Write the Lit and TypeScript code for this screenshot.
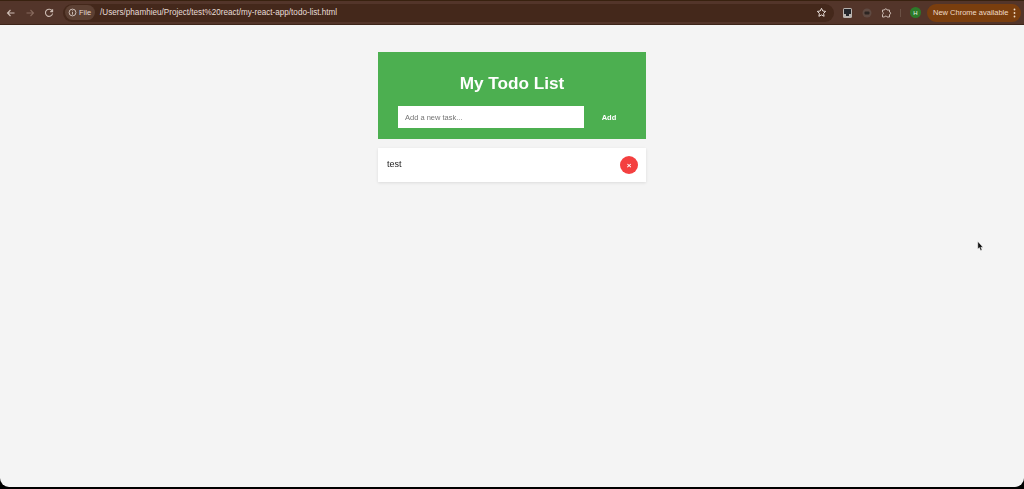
import { LitElement, html, css } from "lit";
import { customElement } from "lit/decorators.js";

@customElement("app-root")
export class AppRoot extends LitElement {
  static styles = css`
    :host {
      display: block;
      width: 1024px;
      height: 489px;
      overflow: hidden;
      background: #000;
      font-family: "Liberation Sans", Arial, sans-serif;
    }
    .window {
      height: 487px;
      display: flex;
      flex-direction: column;
      background: #f4f4f4;
      border-radius: 0 0 9px 9px;
      overflow: hidden;
      position: relative;
      filter: blur(0.3px);
    }
    .toolbar {
      height: 25px;
      flex: none;
      background: #53352a;
      border-top: 1px solid #38210f;
      border-bottom: 1px solid #3d2418;
      box-sizing: border-box;
      display: flex;
      align-items: center;
      color: #eadfd9;
      font-size: 8px;
    }
    .nav {
      display: flex;
      align-items: center;
      gap: 8px;
      padding-left: 5px;
      width: 63px;
      flex: none;
      box-sizing: border-box;
    }
    .nav svg, .tools svg { display: block; flex: none; }
    .omni {
      width: 771px;
      height: 18px;
      flex: none;
      border-radius: 9px;
      background: #44281b;
      display: flex;
      align-items: center;
      box-sizing: border-box;
      padding-right: 7px;
    }
    .chip {
      height: 15px;
      margin-left: 2px;
      padding: 0 4px 0 3px;
      border-radius: 8px;
      background: #5c4033;
      display: flex;
      align-items: center;
      gap: 2px;
      flex: none;
      color: #e4d8d2;
      font-size: 7.5px;
    }
    .url {
      margin-left: 5px;
      color: #e8ddd8;
      flex: 1;
      white-space: nowrap;
      font-size: 8.15px;
    }
    .tools {
      display: flex;
      align-items: center;
      flex: 1;
      padding-left: 8px;
    }
    .sep { width: 1px; height: 8px; background: #6a5044; margin: 0 9px 0 8px; }
    .avatar {
      width: 11px;
      height: 11px;
      border-radius: 50%;
      background: #2d7a2a;
      color: #e6f2e6;
      font-size: 6px;
      display: flex;
      align-items: center;
      justify-content: center;
      flex: none;
    }
    .update {
      margin-left: 6px;
      height: 18px;
      width: 94px;
      flex: none;
      box-sizing: border-box;
      border-radius: 9px;
      background: #7a3e0e;
      color: #f0dcc8;
      font-size: 7.5px;
      display: flex;
      align-items: center;
      justify-content: space-between;
      padding: 0 5px 0 6px;
      white-space: nowrap;
    }
    main {
      flex: 1;
      display: flex;
      flex-direction: column;
      align-items: center;
      padding-top: 27px;
    }
    .card {
      width: 268px;
      display: flex;
      flex-direction: column;
      gap: 9px;
    }
    header {
      height: 87px;
      box-sizing: border-box;
      background: #4caf50;
      padding: 21px 20px 0;
      display: flex;
      flex-direction: column;
      align-items: center;
    }
    h1 {
      margin: 0;
      color: #fff;
      font-size: 17.2px;
      line-height: 21px;
      font-weight: 700;
    }
    .form {
      margin-top: 12px;
      display: flex;
      align-self: stretch;
      height: 22px;
    }
    .field {
      width: 186px;
      flex: none;
      background: #fff;
      color: #757575;
      font-size: 7.5px;
      display: flex;
      align-items: center;
      padding-left: 7px;
      box-sizing: border-box;
    }
    .add {
      flex: 1;
      color: #fff;
      font-size: 7.5px;
      font-weight: 700;
      display: flex;
      align-items: center;
      justify-content: center;
      padding-left: 8px;
    }
    .item {
      height: 34px;
      box-sizing: border-box;
      background: #fff;
      box-shadow: 0 1px 3px rgba(0, 0, 0, 0.1);
      display: flex;
      align-items: center;
      justify-content: space-between;
      padding: 0 8px 0 9px;
      color: #222;
      font-size: 9px;
    }
    .label { padding-bottom: 2px; }
    .del {
      width: 18px;
      height: 18px;
      border-radius: 50%;
      background: #f44040;
      color: #fff;
      font-size: 8px;
      font-weight: 700;
      display: flex;
      align-items: center;
      justify-content: center;
    }
    .cursor { position: absolute; left: 977px; top: 241px; }
  `;

  render() {
    return html`
      <div class="window">
        <div class="toolbar">
          <div class="nav">
            <svg width="12" height="12" viewBox="0 0 12 12" fill="none" stroke="#cdbcb3" stroke-width="1.1"><path d="M9.5 6H2.5M5.5 3L2.5 6L5.5 9"/></svg>
            <svg width="10" height="12" viewBox="0 0 10 12" fill="none" stroke="#86695c" stroke-width="1.1"><path d="M1.5 6H8.5M5.5 3L8.5 6L5.5 9"/></svg>
            <svg width="12" height="12" viewBox="0 0 12 12" fill="none" stroke="#cdbcb3" stroke-width="1.1"><path d="M9.3 4.2A3.6 3.6 0 1 0 9.6 6.5"/><path d="M9.6 2.2V4.6H7.2"/></svg>
          </div>
          <div class="omni">
            <div class="chip">
              <svg width="9" height="9" viewBox="0 0 9 9" fill="none" stroke="#e4d8d2" stroke-width=".8"><circle cx="4.5" cy="4.5" r="3.4"/><path d="M4.5 4V6.6M4.5 2.4V3.2"/></svg>
              <span>File</span>
            </div>
            <span class="url">/Users/phamhieu/Project/test%20react/my-react-app/todo-list.html</span>
            <svg width="11" height="11" viewBox="0 0 11 11" fill="none" stroke="#e8ddd8" stroke-width="1"><path d="M5.5 1.3L6.8 4L9.7 4.4L7.6 6.4L8.1 9.3L5.5 7.9L2.9 9.3L3.4 6.4L1.3 4.4L4.2 4Z"/></svg>
          </div>
          <div class="tools">
            <svg width="11" height="12" viewBox="0 0 11 12"><rect x="1" y="1" width="9" height="10" rx="1.5" fill="#b9b4b0"/><rect x="2" y="2" width="7" height="5" fill="#23262b"/><rect x="4" y="7" width="3" height="2" fill="#23262b"/></svg>
            <svg style="margin-left:9px" width="10" height="10" viewBox="0 0 10 10"><circle cx="5" cy="5" r="4.5" fill="#5f4a42"/><rect x="2.5" y="3.5" width="5" height="3" rx="1" fill="#2c2522"/></svg>
            <svg style="margin-left:8px" width="12" height="12" viewBox="0 0 12 12" fill="none" stroke="#cdbcb3" stroke-width="1"><path d="M2.5 3H4.5C4.5 1.4 7 1.4 7 3H9.5V5C11 5 11 7.5 9.5 7.5V10H7C7 8.8 4.5 8.8 4.5 10H2.5V7.5C3.6 7.5 3.6 5 2.5 5Z"/></svg>
            <div class="sep"></div>
            <div class="avatar">H</div>
            <div class="update">
              <span>New Chrome available</span>
              <svg width="3" height="10" viewBox="0 0 3 10" fill="#f0dcc8"><circle cx="1.5" cy="1.5" r=".9"/><circle cx="1.5" cy="5" r=".9"/><circle cx="1.5" cy="8.5" r=".9"/></svg>
            </div>
          </div>
        </div>
        <main>
          <div class="card">
            <header>
              <h1>My Todo List</h1>
              <div class="form">
                <div class="field">Add a new task...</div>
                <div class="add">Add</div>
              </div>
            </header>
            <div class="item">
              <span class="label">test</span>
              <div class="del">×</div>
            </div>
          </div>
        </main>
        <svg class="cursor" width="7" height="11" viewBox="0 0 7 11"><path d="M.8.5V8L2.4 6.6L3.6 9.6L5 9L3.8 6.2H6Z" fill="#111" stroke="#fff" stroke-width=".4"/></svg>
      </div>
    `;
  }
}
